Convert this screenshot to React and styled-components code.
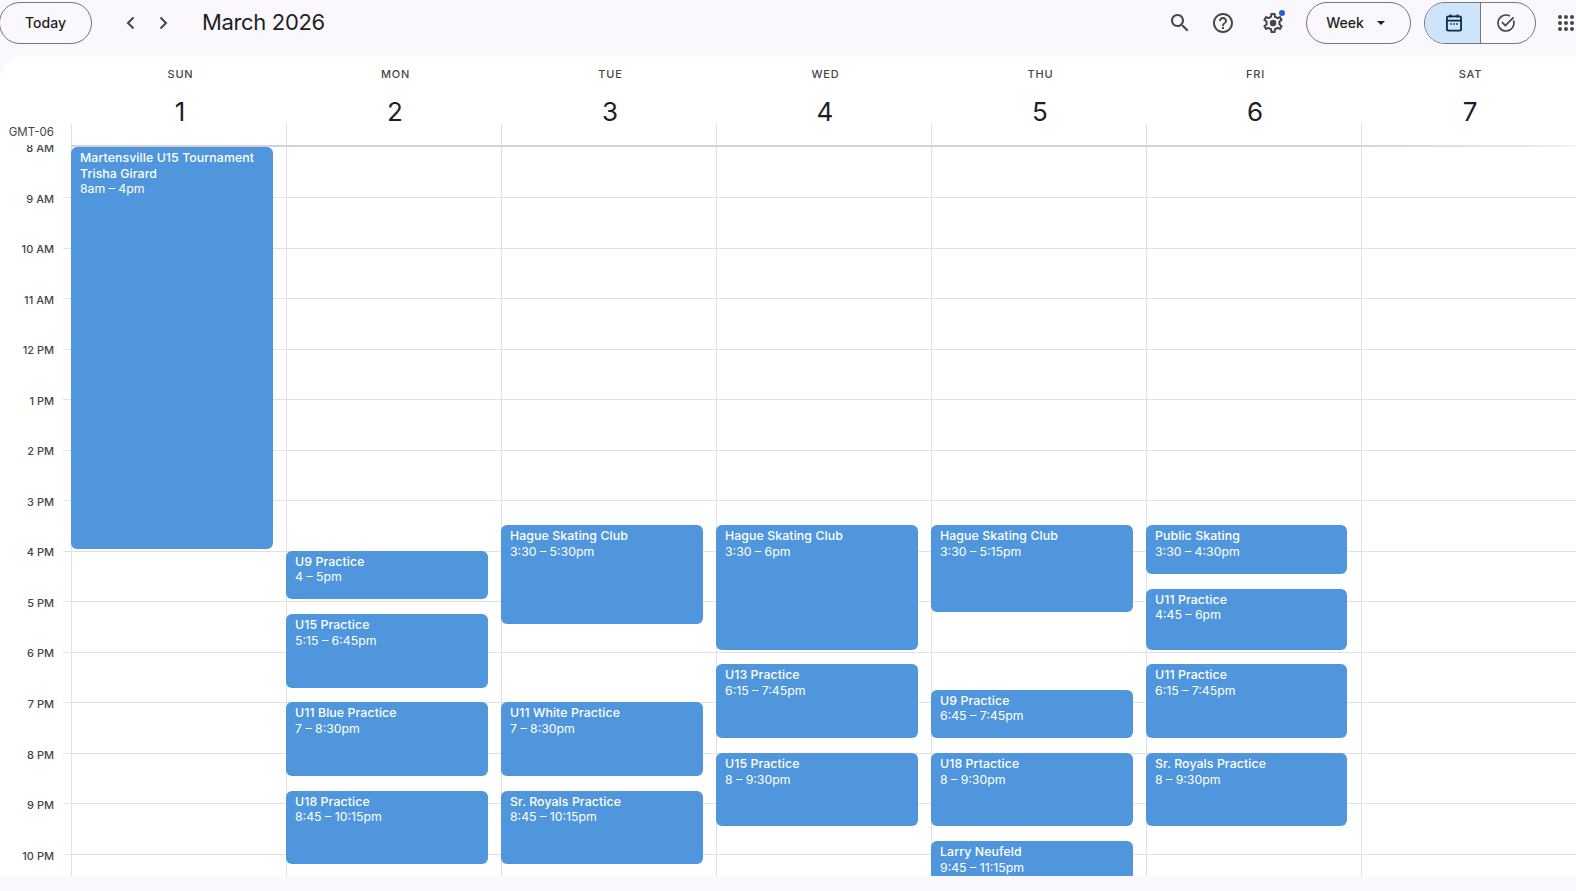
import React from 'react';
import styled, { createGlobalStyle } from 'styled-components';

const HOUR = 50.54;

const GlobalStyle = createGlobalStyle`
  html, body {
    margin: 0;
    padding: 0;
    height: 100%;
    overflow: hidden;
    background: #faf8fc;
  }
`;

const Page = styled.div`
  width: 1576px;
  height: 891px;
  overflow: hidden;
  background: #faf8fc;
  font-family: Inter, "Liberation Sans", sans-serif;
  color: #1f1f1f;
`;

const Toolbar = styled.header`
  display: flex;
  align-items: center;
  height: 56px;
  padding-bottom: 11px;
  box-sizing: border-box;
`;

const PillButton = styled.button`
  display: flex;
  align-items: center;
  justify-content: center;
  gap: ${({ $gap }) => $gap || 0}px;
  height: 42px;
  width: ${({ $width }) => $width}px;
  padding: 0;
  box-sizing: border-box;
  background: transparent;
  border: 1px solid #747775;
  border-radius: 21px;
  font: 500 14px Inter, sans-serif;
  color: #1f1f1f;
`;

const TodayButton = styled(PillButton)`
  margin-left: -1px;
`;

const WeekButton = styled(PillButton)`
  padding-right: 6px;
`;

const NavGroup = styled.div`
  display: flex;
  align-items: center;
  gap: 8px;
  margin-left: 27px;
`;

const IconSlot = styled.span`
  display: flex;
  align-items: center;
  justify-content: center;
  width: ${({ $size }) => $size || 24}px;
  height: 24px;
  color: #444746;
`;

const MonthTitle = styled.h1`
  margin: 0 0 2px 27px;
  font: 400 22px Inter, sans-serif;
  letter-spacing: -0.35px;
  color: #1f1f1f;
`;

const RightTools = styled.div`
  display: flex;
  align-items: center;
  margin-left: auto;
`;

const ToolIcon = styled(IconSlot)`
  position: relative;
  margin-right: ${({ $gap }) => $gap}px;
`;

const NotifyDot = styled.span`
  position: absolute;
  top: -1px;
  right: 0;
  width: 6px;
  height: 6px;
  border-radius: 50%;
  background: #2b5bd7;
`;

const ViewToggle = styled.div`
  display: flex;
  height: 42px;
  width: 112px;
  margin-left: 13px;
  box-sizing: border-box;
  border: 1px solid #747775;
  border-radius: 21px;
  overflow: hidden;
`;

const ToggleSide = styled.span`
  flex: ${({ $active }) => ($active ? '0 0 56px' : '1')};
  box-sizing: border-box;
  display: flex;
  align-items: center;
  justify-content: center;
  padding: ${({ $active }) => ($active ? '0 0 0 3px' : '0 4px 0 0')};
  background: ${({ $active }) => ($active ? '#cde4fb' : 'transparent')};
  border-right: ${({ $active }) => ($active ? '1px solid #747775' : 'none')};
  color: ${({ $active }) => ($active ? '#0b2b4d' : '#444746')};
`;

const AppsSlot = styled(IconSlot)`
  margin-left: 18px;
  margin-right: -2px;
`;

const Panel = styled.main`
  height: 820px;
  background: #fff;
  border-top-left-radius: 24px;
  overflow: hidden;
`;

const HeadRow = styled.div`
  display: grid;
  grid-template-columns: 71px repeat(7, 215px);
  height: 89px;
`;

const ZoneCell = styled.div`
  display: flex;
  align-items: flex-end;
  justify-content: flex-end;
  padding: 0 17px 6px 0;
  font-size: 11.5px;
  line-height: 14px;
  color: #444746;
`;

const DayHead = styled.div`
  display: flex;
  flex-direction: column;
  align-items: center;
`;

const DayName = styled.span`
  margin: 12px 0 0 4px;
  font-size: 11px;
  font-weight: 500;
  line-height: 13px;
  letter-spacing: 0.8px;
  color: #444746;
`;

const DayNumber = styled.span`
  margin: 20px 0 0 3px;
  font-size: 26px;
  line-height: 22px;
  color: #1f1f1f;
`;

const HeadStub = styled.span`
  align-self: flex-start;
  margin-top: auto;
  height: 21px;
  border-left: 1px solid #e0e0e6;
`;

const HeadRule = styled.div`
  position: relative;
  z-index: 2;
  height: 2px;
  margin-left: 71px;
  background: linear-gradient(to right, #d2d1d6 0, #d2d1d6 84%, #e8e7ec 97%, #f4f4f6 100%);
`;

const TimeGrid = styled.div`
  display: grid;
  grid-template-columns: 71px repeat(7, 215px);
  height: 731px;
  margin-top: -2px;
  overflow: hidden;
`;

const Gutter = styled.div`
  padding-top: 2.46px;
`;

const HourLabel = styled.div`
  position: relative;
  height: ${HOUR}px;
  box-sizing: border-box;

  &::after {
    content: '';
    position: absolute;
    right: 0;
    bottom: 0;
    width: 8px;
    height: 1px;
    background: #e0e0e6;
  }
`;

const HourText = styled.span`
  position: absolute;
  right: 17px;
  top: -6.3px;
  font-size: 11px;
  font-weight: 500;
  line-height: 14px;
  white-space: nowrap;
  color: #444746;
`;

const DayColumn = styled.div`
  position: relative;
  padding-top: 2.46px;
  border-left: 1px solid #e0e0e6;
`;

const HourCell = styled.div`
  height: ${HOUR}px;
  box-sizing: border-box;
  border-bottom: 1px solid #e0e0e6;
`;

const Event = styled.article`
  position: absolute;
  left: -1px;
  width: ${({ $wide }) => ($wide ? 202 : 201)}px;
  top: ${({ $start }) => Math.max(2, ($start - 8) * HOUR + 1.4)}px;
  height: ${({ $start, $end }) => ($end - $start) * HOUR - 2.2}px;
  box-sizing: border-box;
  padding: 3px 9px;
  background: #4f96dc;
  border-radius: 6px;
  overflow: hidden;
  color: #fff;
  font-size: 12.3px;
  line-height: 15.7px;
`;

const EventTitle = styled.div`
  font-weight: 550;
  letter-spacing: 0.1px;
`;

const EventTime = styled.div`
  font-weight: 400;
`;

const SearchIcon = () => (
  <svg width="24" height="24" viewBox="0 0 24 24" fill="currentColor">
    <path d="M15.5 14h-.79l-.28-.27C15.41 12.59 16 11.11 16 9.5 16 5.91 13.09 3 9.5 3S3 5.91 3 9.5 5.91 16 9.5 16c1.61 0 3.09-.59 4.23-1.57l.27.28v.79l5 4.99L20.49 19l-4.99-5zm-6 0C7.01 14 5 11.99 5 9.5S7.01 5 9.5 5 14 7.01 14 9.5 11.99 14 9.5 14z" />
  </svg>
);

const HelpIcon = () => (
  <svg width="24" height="24" viewBox="0 0 24 24" fill="currentColor">
    <path d="M11 18h2v-2h-2v2zm1-16C6.48 2 2 6.48 2 12s4.48 10 10 10 10-4.48 10-10S17.52 2 12 2zm0 18c-4.41 0-8-3.59-8-8s3.59-8 8-8 8 3.59 8 8-3.59 8-8 8zm0-14c-2.21 0-4 1.79-4 4h2c0-1.1.9-2 2-2s2 .9 2 2c0 2-3 1.75-3 5h2c0-2.25 3-2.5 3-5 0-2.21-1.79-4-4-4z" />
  </svg>
);

const GearIcon = () => (
  <svg width="24" height="24" viewBox="0 0 24 24" fill="currentColor">
    <path d="M19.43 12.98c.04-.32.07-.64.07-.98 0-.34-.03-.66-.07-.98l2.11-1.65c.19-.15.24-.42.12-.64l-2-3.46c-.09-.16-.26-.25-.44-.25-.06 0-.12.01-.17.03l-2.49 1c-.52-.4-1.08-.73-1.69-.98l-.38-2.65C14.46 2.18 14.25 2 14 2h-4c-.25 0-.46.18-.49.42l-.38 2.65c-.61.25-1.17.59-1.69.98l-2.49-1c-.06-.02-.12-.03-.18-.03-.17 0-.34.09-.43.25l-2 3.46c-.13.22-.07.49.12.64l2.11 1.65c-.04.32-.07.65-.07.98 0 .33.03.66.07.98l-2.11 1.65c-.19.15-.24.42-.12.64l2 3.46c.09.16.26.25.44.25.06 0 .12-.01.17-.03l2.49-1c.52.4 1.08.73 1.69.98l.38 2.65c.03.24.24.42.49.42h4c.25 0 .46-.18.49-.42l.38-2.65c.61-.25 1.17-.59 1.69-.98l2.49 1c.06.02.12.03.18.03.17 0 .34-.09.43-.25l2-3.46c.12-.22.07-.49-.12-.64l-2.11-1.65zm-1.98-1.71c.04.31.05.52.05.73 0 .21-.02.43-.05.73l-.14 1.13.89.7 1.08.84-.7 1.21-1.27-.51-1.04-.42-.9.68c-.43.32-.84.56-1.25.73l-1.06.43-.16 1.13-.2 1.35h-1.4l-.19-1.35-.16-1.13-1.06-.43c-.43-.18-.83-.41-1.23-.71l-.91-.7-1.06.43-1.27.51-.7-1.21 1.08-.84.89-.7-.14-1.13c-.03-.31-.05-.54-.05-.74s.02-.43.05-.73l.14-1.13-.89-.7-1.08-.84.7-1.21 1.27.51 1.04.42.9-.68c.43-.32.84-.56 1.25-.73l1.06-.43.16-1.13.2-1.35h1.39l.19 1.35.16 1.13 1.06.43c.43.18.83.41 1.23.71l.91.7 1.06-.43 1.27-.51.7 1.21-1.07.85-.89.7.14 1.13z" />
    <circle cx="12" cy="12" r="3.3" />
  </svg>
);

const Chevron = ({ left }) => (
  <svg width="24" height="24" viewBox="0 0 24 24" fill="none" stroke="currentColor" strokeWidth="2">
    <path d={left ? 'M14.5 6.5 9 12l5.5 5.5' : 'M9.5 6.5 15 12l-5.5 5.5'} />
  </svg>
);

const CaretDown = () => (
  <svg width="8" height="4" viewBox="0 0 8 4" fill="#1f1f1f">
    <path d="M0 0h8L4 4z" />
  </svg>
);

const CalendarIcon = () => (
  <svg width="22" height="22" viewBox="0 0 22 22" fill="none" stroke="currentColor" strokeWidth="1.8">
    <rect x="3.9" y="4.4" width="14.2" height="14.2" rx="1.6" />
    <path d="M4 8.6h14M7.5 2.4v3.2M14.5 2.4v3.2" />
    <path d="M7.2 12h1.6M10.2 12h1.6M13.2 12h1.6" strokeWidth="1.3" />
  </svg>
);

const TaskIcon = () => (
  <svg width="22" height="22" viewBox="0 0 22 22" fill="none" stroke="currentColor" strokeWidth="1.6">
    <path d="M18.6 8.6A8 8 0 1 1 14.8 4" />
    <path d="m7 10.2 3.4 3.4 8.2-8.2" strokeWidth="1.8" />
  </svg>
);

const AppsIcon = () => (
  <svg width="18" height="18" viewBox="0 0 18 18" fill="#444746">
    {[3, 9, 15].map((cy) =>
      [3, 9, 15].map((cx) => <circle key={`${cx}-${cy}`} cx={cx} cy={cy} r="2" />)
    )}
  </svg>
);

const days = [
  {
    name: 'SUN',
    number: 1,
    events: [
      { title: 'Martensville U15 Tournament', extra: 'Trisha Girard', time: '8am – 4pm', start: 8, end: 16 },
    ],
  },
  {
    name: 'MON',
    number: 2,
    events: [
      { title: 'U9 Practice', time: '4 – 5pm', start: 16, end: 17 },
      { title: 'U15 Practice', time: '5:15 – 6:45pm', start: 17.25, end: 18.75 },
      { title: 'U11 Blue Practice', time: '7 – 8:30pm', start: 19, end: 20.5 },
      { title: 'U18 Practice', time: '8:45 – 10:15pm', start: 20.75, end: 22.25 },
    ],
  },
  {
    name: 'TUE',
    number: 3,
    events: [
      { title: 'Hague Skating Club', time: '3:30 – 5:30pm', start: 15.5, end: 17.5 },
      { title: 'U11 White Practice', time: '7 – 8:30pm', start: 19, end: 20.5 },
      { title: 'Sr. Royals Practice', time: '8:45 – 10:15pm', start: 20.75, end: 22.25 },
    ],
  },
  {
    name: 'WED',
    number: 4,
    events: [
      { title: 'Hague Skating Club', time: '3:30 – 6pm', start: 15.5, end: 18 },
      { title: 'U13 Practice', time: '6:15 – 7:45pm', start: 18.25, end: 19.75 },
      { title: 'U15 Practice', time: '8 – 9:30pm', start: 20, end: 21.5 },
    ],
  },
  {
    name: 'THU',
    number: 5,
    events: [
      { title: 'Hague Skating Club', time: '3:30 – 5:15pm', start: 15.5, end: 17.25 },
      { title: 'U9 Practice', time: '6:45 – 7:45pm', start: 18.75, end: 19.75 },
      { title: 'U18 Prtactice', time: '8 – 9:30pm', start: 20, end: 21.5 },
      { title: 'Larry Neufeld', time: '9:45 – 11:15pm', start: 21.75, end: 23.25 },
    ],
  },
  {
    name: 'FRI',
    number: 6,
    events: [
      { title: 'Public Skating', time: '3:30 – 4:30pm', start: 15.5, end: 16.5 },
      { title: 'U11 Practice', time: '4:45 – 6pm', start: 16.75, end: 18 },
      { title: 'U11 Practice', time: '6:15 – 7:45pm', start: 18.25, end: 19.75 },
      { title: 'Sr. Royals Practice', time: '8 – 9:30pm', start: 20, end: 21.5 },
    ],
  },
  { name: 'SAT', number: 7, events: [] },
];

const hours = ['8 AM', '9 AM', '10 AM', '11 AM', '12 PM', '1 PM', '2 PM', '3 PM', '4 PM', '5 PM', '6 PM', '7 PM', '8 PM', '9 PM', '10 PM'];

const App = () => {
  return (
    <Page>
      <GlobalStyle />
      <Toolbar>
        <TodayButton $width={93}>Today</TodayButton>
        <NavGroup>
          <IconSlot><Chevron left /></IconSlot>
          <IconSlot><Chevron /></IconSlot>
        </NavGroup>
        <MonthTitle>March 2026</MonthTitle>
        <RightTools>
          <ToolIcon $gap={19}><SearchIcon /></ToolIcon>
          <ToolIcon $gap={26}><HelpIcon /></ToolIcon>
          <ToolIcon $gap={21}>
            <GearIcon />
            <NotifyDot />
          </ToolIcon>
          <WeekButton $width={105} $gap={13}>Week <CaretDown /></WeekButton>
          <ViewToggle>
            <ToggleSide $active><CalendarIcon /></ToggleSide>
            <ToggleSide><TaskIcon /></ToggleSide>
          </ViewToggle>
          <AppsSlot><AppsIcon /></AppsSlot>
        </RightTools>
      </Toolbar>
      <Panel>
        <HeadRow>
          <ZoneCell>GMT-06</ZoneCell>
          {days.map((day) => (
            <DayHead key={day.name}>
              <DayName>{day.name}</DayName>
              <DayNumber>{day.number}</DayNumber>
              <HeadStub />
            </DayHead>
          ))}
        </HeadRow>
        <HeadRule />
        <TimeGrid>
          <Gutter>
            {hours.map((hour) => (
              <HourLabel key={hour}>
                <HourText>{hour}</HourText>
              </HourLabel>
            ))}
          </Gutter>
          {days.map((day) => (
            <DayColumn key={day.name}>
              {hours.map((hour) => (
                <HourCell key={hour} />
              ))}
              {day.events.map((ev) => (
                <Event key={ev.title + ev.start} $start={ev.start} $end={ev.end} $wide={day.number < 6}>
                  <EventTitle>{ev.title}</EventTitle>
                  {ev.extra && <EventTitle>{ev.extra}</EventTitle>}
                  <EventTime>{ev.time}</EventTime>
                </Event>
              ))}
            </DayColumn>
          ))}
        </TimeGrid>
      </Panel>
    </Page>
  );
};

export default App;
